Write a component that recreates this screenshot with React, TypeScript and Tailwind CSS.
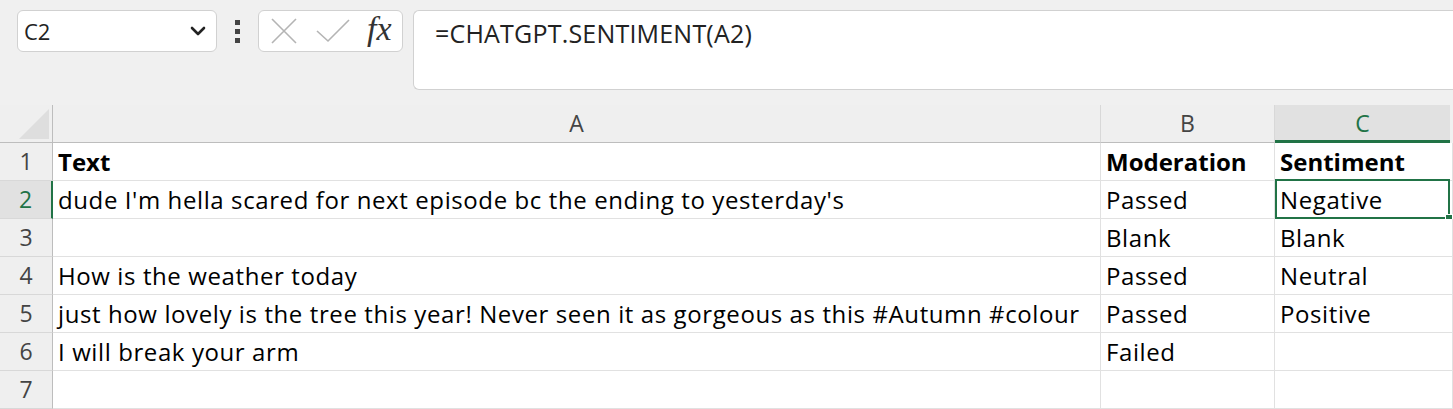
import React from 'react';

const cellFont = { fontFamily: '"Open Sans", "Noto Sans", sans-serif' };

const rows: { n: number; a: string; b: string; c: string; bold?: boolean }[] = [
    { n: 1, a: 'Text', b: 'Moderation', c: 'Sentiment', bold: true },
    { n: 2, a: "dude I'm hella scared for next episode bc the ending to yesterday's", b: 'Passed', c: 'Negative' },
    { n: 3, a: '', b: 'Blank', c: 'Blank' },
    { n: 4, a: 'How is the weather today', b: 'Passed', c: 'Neutral' },
    { n: 5, a: 'just how lovely is the tree this year! Never seen it as gorgeous as this #Autumn #colour', b: 'Passed', c: 'Positive' },
    { n: 6, a: 'I will break your arm', b: 'Failed', c: '' },
    { n: 7, a: '', b: '', c: '' },
];

function Toolbar() {
    return (
        <div className="flex items-start h-[105px] pt-[10px] font-['Open_Sans',sans-serif]">
            {/* name box */}
            <div className="ml-[17px] w-[200px] h-[42px] bg-white border border-[#d1d1d1] rounded-[6px] flex items-center justify-between pl-[6px] pr-[10px]">
                <span className="text-[22px] text-[#222] leading-none">C2</span>
                <svg width="16" height="10" viewBox="0 0 16 10">
                    <path d="M2 2 L8 8 L14 2" fill="none" stroke="#222" strokeWidth="2.6" strokeLinecap="round" strokeLinejoin="round" />
                </svg>
            </div>
            {/* more dots */}
            <div className="w-[41px] h-[42px] flex flex-col items-center justify-center gap-[4px]">
                <div className="w-[5px] h-[5px] bg-[#444]" />
                <div className="w-[5px] h-[5px] bg-[#444]" />
                <div className="w-[5px] h-[5px] bg-[#444]" />
            </div>
            {/* cancel / enter / fx */}
            <div className="w-[145px] h-[42px] bg-white border border-[#d1d1d1] rounded-[6px] flex items-center pl-[12px]">
                <svg width="26" height="26" viewBox="0 0 26 26">
                    <path d="M1 1 L25 25 M25 1 L1 25" stroke="#b4b4b4" strokeWidth="1.6" fill="none" />
                </svg>
                <svg width="34" height="24" viewBox="0 0 34 24" className="ml-[19px]">
                    <path d="M1 12 L12 22 L33 1" stroke="#b4b4b4" strokeWidth="1.6" fill="none" />
                </svg>
                <span className="ml-[17px] text-[34px] leading-none italic text-[#333] font-['Liberation_Serif',serif] -mt-[4px]">fx</span>
            </div>
            {/* formula bar */}
            <div className="ml-[10px] flex-1 h-[80px] bg-white border border-[#d1d1d1] border-r-0 rounded-l-[6px] pl-[21px] pt-[10px]">
                <span className="text-[25px] tracking-[0.2px] text-[#222] leading-none">=CHATGPT.SENTIMENT(A2)</span>
            </div>
        </div>
    );
}

function Grid() {
    return (
        <div className="grid grid-cols-[53px_1048px_174px_178px] grid-rows-[38px_repeat(7,38px)]">
            {/* corner */}
            <div className="bg-[#efefef] border-r border-b border-[#bdbdbd] flex items-end justify-end pr-[3px] pb-[3px]">
                <svg width="30" height="30" viewBox="0 0 30 30">
                    <path d="M30 0 L30 30 L0 30 Z" fill="#dedede" />
                </svg>
            </div>
            <div className="bg-[#efefef] border-r border-b border-r-[#d8d8d8] border-b-[#bdbdbd] flex items-center justify-center text-[23px] text-[#444] font-['Open_Sans',sans-serif]">A</div>
            <div className="bg-[#efefef] border-r border-b border-r-[#d8d8d8] border-b-[#bdbdbd] flex items-center justify-center text-[23px] text-[#444] font-['Open_Sans',sans-serif]">B</div>
            <div className="bg-[#e1e1e1] border-b-[3px] border-[#217346] mr-[3px] flex items-center justify-center text-[23px] text-[#217346] font-['Open_Sans',sans-serif] pt-[2px]">C</div>

            {rows.map((r) => {
                const sel = r.n === 2;
                const cell = `bg-white border-b border-r border-[#e1e1e1] flex items-end pl-[5px] pb-[2px] text-[24px] leading-[32px] text-black whitespace-nowrap ${r.bold ? 'font-bold' : 'tracking-[0.6px]'}`;
                return (
                    <React.Fragment key={r.n}>
                        <div
                            className={`border-b border-r flex items-center justify-center text-[23px] font-['Open_Sans',sans-serif] ${
                                sel
                                    ? 'bg-[#e1e1e1] text-[#217346] border-b-[#d8d8d8] border-r-[#217346] border-r-2'
                                    : 'bg-[#efefef] text-[#444] border-b-[#d8d8d8] border-r-[#bdbdbd]'
                            }`}
                        >
                            {r.n}
                        </div>
                        <div className={cell} style={cellFont}>
                            {r.a}
                        </div>
                        <div className={cell} style={cellFont}>
                            {r.b}
                        </div>
                        <div className={`relative ${cell}`} style={cellFont}>
                            {r.c}
                            {sel && (
                                <>
                                    <div className="absolute left-0 top-[-2px] right-[2px] bottom-[-1px] border-2 border-[#217346] pointer-events-none" />
                                    <div className="absolute right-[-1px] bottom-[-4px] w-[8px] h-[8px] bg-[#217346] border border-white" />
                                </>
                            )}
                        </div>
                    </React.Fragment>
                );
            })}
        </div>
    );
}

export default function App() {
    return (
        <div className="w-[1453px] h-[409px] bg-[#f0f0f0] overflow-hidden">
            <Toolbar />
            <Grid />
        </div>
    );
}
